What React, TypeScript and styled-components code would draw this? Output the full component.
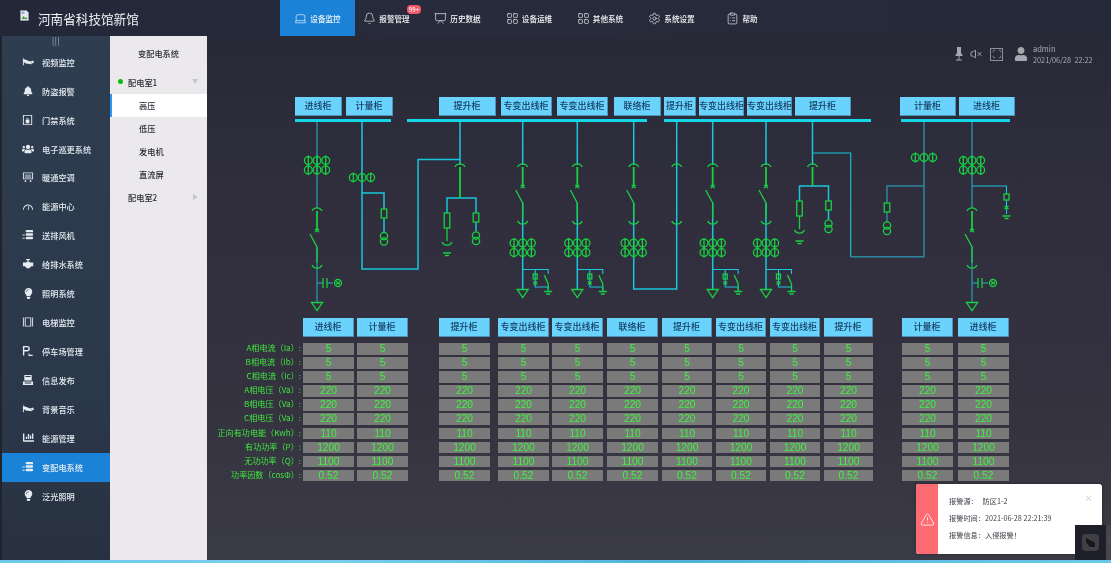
import React from "react";
import styled, { createGlobalStyle } from "styled-components";
import { Laptop, Bell, Presentation, LayoutGrid, Settings, ClipboardList, VolumeX, Scan, X, TriangleAlert } from "lucide-react";
import { FaBell, FaUsers, FaUser, FaLightbulb, FaChartBar } from "react-icons/fa";

const FONT = `"Noto Sans CJK SC", "Noto Sans", sans-serif`;

const Global = createGlobalStyle`
  html, body { margin: 0; padding: 0; background: #2f2d3b; overflow: hidden; }
  * { box-sizing: border-box; }
`;

const Page = styled.div`
  position: relative; width: 1111px; height: 563px; overflow: hidden;
  display: flex; flex-direction: column; font-family: ${FONT}; filter: blur(0.3px);
`;
const Header = styled.header`
  height: 36px; flex: none; display: flex; align-items: stretch;
  background: linear-gradient(90deg, #232838, #272b3b 40%, #252938);
`;
const Brand = styled.div`
  width: 280px; display: flex; align-items: center; padding-left: 20px; gap: 9px;
  color: #f0f2f5; font-size: 12.6px; white-space: nowrap;
`;
const BrokenImage = styled.svg`width: 9px; height: 11px; flex: none; margin-bottom: 6px;`;
const Nav = styled.nav`display: flex; align-items: stretch;`;
const NavItem = styled.div<{ $w: number; $active?: boolean }>`
  position: relative; width: ${p => p.$w}px; display: flex; align-items: center; justify-content: center; gap: 3px;
  color: #f4f5f8; font-size: 7.6px; font-weight: 500; white-space: nowrap;
  background: ${p => (p.$active ? "#1a83d8" : "transparent")};
`;
const Badge = styled.span`
  position: absolute; left: 52px; top: 5px; width: 14px; height: 9px; border-radius: 4px;
  background: #f2596a; color: #fff; font-size: 6px; line-height: 9px; text-align: center;
`;
const Body = styled.div`flex: 1; display: flex; min-height: 0;`;
const Gutter = styled.div`width: 2px; background: #20222c;`;
const Side = styled.aside`
  width: 108px; display: flex; flex-direction: column;
  background: linear-gradient(180deg, #2e3d50, #2b384a 70%, #28313f);
`;
const Handle = styled.div`
  height: 11.8px; color: #aab2bd; font-size: 8px; line-height: 10px; text-align: center; letter-spacing: 0.5px;
`;
const SideItem = styled.div<{ $active?: boolean }>`
  height: 28.93px; flex: none; display: flex; align-items: center; gap: 8px; padding: 0 0 1px 20px;
  color: #e6ebf1; font-size: 8.2px; font-weight: 500; white-space: nowrap;
  background: ${p => (p.$active ? "#1a83d8" : "transparent")};
`;
const SideIcon = styled.svg`width: 12px; height: 12px; flex: none; fill: #e6ebf1; stroke: none;`;
const IconSlot = styled.span`
  width: 12px; height: 12px; flex: none; display: flex; align-items: center; justify-content: center; color: #e6ebf1;
`;
const SubSide = styled.aside`
  width: 97px; background: #ebe9ec; color: #2b2d36; font-size: 8.2px; font-weight: 500; display: flex; flex-direction: column;
`;
const SubTitle = styled.div`height: 35px; padding-top: 10px; line-height: 14px; text-align: center; font-size: 8.2px;`;
const SubGroup = styled.div`
  height: 23px; display: flex; align-items: center; padding: 0 9px 2px 8px; position: relative;
`;
const Dot = styled.span<{ $on?: boolean }>`
  width: 5px; height: 5px; border-radius: 50%; margin-right: 5px; background: ${p => (p.$on ? "#0fb70f" : "transparent")};
`;
const Caret = styled.span<{ $open?: boolean }>`
  margin-left: auto; width: 0; height: 0; border-style: solid;
  ${p => p.$open
    ? "border-width: 5px 3px 0 3px; border-color: #c6c6cb transparent transparent transparent;"
    : "border-width: 3px 0 3px 5px; border-color: transparent transparent transparent #c6c6cb;"}
`;
const SubItem = styled.div<{ $active?: boolean }>`
  height: 23px; display: flex; align-items: center; padding: 0 0 2px 27px;
  border-left: 2.5px solid ${p => (p.$active ? "#2f97f0" : "transparent")};
  background: ${p => (p.$active ? "#fff" : "transparent")};
`;
const Main = styled.main`
  flex: 1; display: flex; flex-direction: column; min-width: 0;
  background: linear-gradient(180deg, #272937 0, #302e3d 30%, #34323f 70%, #3b3b47 100%);
`;
const Status = styled.div`
  height: 61px; flex: none; display: flex; align-items: flex-start; padding: 8px 18px 0 0; justify-content: flex-end; color: #a6a8af;
`;
const StatusIcons = styled.div`display: flex; align-items: center; margin: 3px 5px 0 0;`;
const StatusIcon = styled.span<{ $ml: number }>`display: flex; margin-left: ${p => p.$ml}px;`;
const FrameBox = styled.span`
  width: 13px; height: 13px; margin-left: 8px; border: 1px solid #8e9098; display: flex; align-items: center; justify-content: center;
`;
const UserInfo = styled.div`
  display: flex; flex-direction: column; font-size: 7.3px; line-height: 10.5px; color: #a9abb3; white-space: pre; width: 60px;
`;
const UserName = styled.span`font-size: 7.5px; color: #a9abb3;`;
const Cabinets = styled.div<{ $h: number; $pad: number }>`
  display: flex; height: ${p => p.$h}px; flex: none; padding-left: ${p => p.$pad}px;
`;
const Cabinet = styled.div<{ $w: number; $ml: number }>`
  width: ${p => p.$w}px; margin-left: ${p => p.$ml}px; flex: none; white-space: nowrap; overflow: hidden;
  background: #69d3fe; color: #173f63; font-size: 9px; font-weight: 500; text-align: center; line-height: 18px;
  border-right: 1px solid #4f93b8; border-bottom: 1px solid #4f93b8;
`;
const Diagram = styled.svg`display: block; flex: none; width: 904px; height: 202px;`;
const Wire = styled.path<{ $dark?: boolean; $thin?: boolean }>`
  fill: none; stroke: ${p => (p.$dark ? "#2a87a0" : "#19c6dc")}; stroke-width: ${p => (p.$thin ? 1.1 : 1.5)};
`;
const Bus = styled.rect`fill: #14d6e6;`;
const Green = styled.g`fill: none; stroke: #18d040; stroke-width: 1.3;`;
const Table = styled.div`margin-top: 6px; display: flex; flex-direction: column; gap: 2.6px;`;
const Row = styled.div`display: flex; height: 11.5px; flex: none;`;
const RowLabel = styled.div`
  width: 94px; flex: none; text-align: right; color: #3fe83f; font-size: 8.1px; line-height: 10.5px; white-space: nowrap; overflow: visible; direction: rtl;
`;
const Cell = styled.div<{ $w: number; $ml: number }>`
  width: ${p => p.$w}px; margin-left: ${p => p.$ml}px; flex: none; background: #7a7a7b; color: #3cf53c;
  font-size: 10.2px; line-height: 11.5px; text-align: center; font-family: "Liberation Sans", sans-serif;
`;
const Footer = styled.div`
  height: 3px; flex: none; background: linear-gradient(90deg, #6cc8ea 0, #7ad0ee 28%, #4fb2dd 60%, #6cc8ea 100%);
`;
const Toast = styled.div`
  position: absolute; left: 916px; top: 484px; width: 186px; height: 70px; border-radius: 3px; overflow: hidden;
  display: flex; background: #fff; box-shadow: 0 0 4px rgba(0,0,0,.3);
`;
const ToastSide = styled.div`
  width: 22px; flex: none; background: #ff6b73; color: #fff; display: flex; align-items: center; justify-content: center;
`;
const ToastBody = styled.div`
  flex: 1; padding: 9px 0 0 11px; font-size: 7.2px; line-height: 17px; color: #3e4049; white-space: pre;
`;
const ToastClose = styled.span`position: absolute; right: 9px; top: 10px; color: #a9a9ad; display: flex;`;
const Widget = styled.div`
  position: absolute; left: 1075px; top: 525px; width: 31px; height: 35px; background: #1f1f29;
  display: flex; align-items: center; justify-content: center;
`;
const WidgetKey = styled.div`
  width: 17px; height: 17px; border-radius: 4px; background: #3f4043; color: #16161c; display: flex; align-items: center; justify-content: center;
`;
const Dots = styled.div`
  position: absolute; left: 1106px; top: 525px; width: 5px; height: 35px; background: #45454f; color: #d64a4a;
  font-size: 6px; line-height: 4px; padding-top: 12px; text-align: center;
`;

const cctv = <path d="M1 3l8 3 2 3-7-1-2-1.5V10h-1V2h1zM9 6l3-1 1 2-2 1z" />;
const server = (
  <>
    <rect x="4" y="1" width="8" height="2.6" rx="1" />
    <rect x="4" y="4.7" width="8" height="2.6" rx="1" />
    <rect x="4" y="8.4" width="8" height="2.6" rx="1" />
    <rect x="0.5" y="6" width="2.5" height="1" />
    <rect x="0.5" y="9.5" width="2.5" height="1" />
  </>
);
const draw: Record<string, React.ReactNode> = {
  door: <path fillRule="evenodd" d="M1 1h10v11H1zM2 2v9h8V2zM4 6h4v4H4zM4.8 6a1.2 1.6 0 0 1 2.4 0v.4h-.8V6a.4.8 0 0 0-.8 0v.4h-.8z" />,
  hvac: <path fillRule="evenodd" d="M1 1.5h11v7.5H1zM2 2.5V8h9V2.500zM3 4h7v1H3zM3 6h7v1H3zM3 10h1.500v2H3zM8.500 10H10v2H8.500z" />,
  gauge: <path fillRule="evenodd" d="M1 10.500a5.500 5.500 0 0 1 11 0h-1a4.500 4.500 0 0 0-9 0zM6 10.500l1.500-5 .7.2-1.300 5z" />,
  valve: <path d="M4.500 1h4v1.500H7.200V4l2 1h3v4H10l-2 2H5.200l-2-2H1V5h3l2-1V2.500H4.500z" />,
  lift: <path fillRule="evenodd" d="M1 1.500h1v10H1zM11 1.500h1v10h-1zM3 1.500h7v10H3zM4 2.500v8h5v-8z" />,
  park: <path fillRule="evenodd" d="M1 1h4.500a3 3 0 0 1 0 6H2.500v4.500H1zM2.500 2.500v3h3a1.500 1.500 0 0 0 0-3zM7 9h1v1.500h3.500V12H7z" />,
  info: <path fillRule="evenodd" d="M2.500 1h8v6h-8zM3.800 2.200v1h5.500v-1zM1 8h11v4H1zM3 9.200v1h7v-1z" />,
};

const NavIcon = { size: 13, strokeWidth: 1.2 };
const sideItems: { t: string; icon: React.ReactNode; active?: boolean }[] = [
  { t: "视频监控", icon: <SideIcon viewBox="0 0 13 13">{cctv}</SideIcon> },
  { t: "防盗报警", icon: <FaBell size={10} /> },
  { t: "门禁系统", icon: <SideIcon viewBox="0 0 13 13">{draw.door}</SideIcon> },
  { t: "电子巡更系统", icon: <FaUsers size={12} /> },
  { t: "暖通空调", icon: <SideIcon viewBox="0 0 13 13">{draw.hvac}</SideIcon> },
  { t: "能源中心", icon: <SideIcon viewBox="0 0 13 13">{draw.gauge}</SideIcon> },
  { t: "送排风机", icon: <SideIcon viewBox="0 0 13 13">{server}</SideIcon> },
  { t: "给排水系统", icon: <SideIcon viewBox="0 0 13 13">{draw.valve}</SideIcon> },
  { t: "照明系统", icon: <FaLightbulb size={11} /> },
  { t: "电梯监控", icon: <SideIcon viewBox="0 0 13 13">{draw.lift}</SideIcon> },
  { t: "停车场管理", icon: <SideIcon viewBox="0 0 13 13">{draw.park}</SideIcon> },
  { t: "信息发布", icon: <SideIcon viewBox="0 0 13 13">{draw.info}</SideIcon> },
  { t: "背景音乐", icon: <SideIcon viewBox="0 0 13 13">{cctv}</SideIcon> },
  { t: "能源管理", icon: <FaChartBar size={11} /> },
  { t: "变配电系统", icon: <SideIcon viewBox="0 0 13 13">{server}</SideIcon>, active: true },
  { t: "泛光照明", icon: <FaLightbulb size={11} /> },
];

const topCabinets: [string, number, number][] = [
  ["进线柜", 47, 88], ["计量柜", 47, 4], ["提升柜", 57, 46], ["专变出线柜", 51, 5], ["专变出线柜", 51, 5],
  ["联络柜", 47, 6], ["提升柜", 32, 3], ["专变出线柜", 45, 3], ["专变出线柜", 45, 3], ["提升柜", 56, 3],
  ["计量柜", 56, 49], ["进线柜", 56, 3],
];
const bottomCabinets: [string, number, number][] = [
  ["进线柜", 51, 2], ["计量柜", 51, 3], ["提升柜", 51, 31], ["专变出线柜", 51, 8], ["专变出线柜", 51, 3],
  ["联络柜", 51, 4], ["提升柜", 50, 4], ["专变出线柜", 50, 4], ["专变出线柜", 50, 4], ["提升柜", 49, 4],
  ["计量柜", 51, 29], ["进线柜", 51, 5],
];
const rows: [string, string][] = [
  ["A相电流（Ia）:", "5"], ["B相电流（Ib）:", "5"], ["C相电流（Ic）:", "5"],
  ["A相电压（Va）:", "220"], ["B相电压（Va）:", "220"], ["C相电压（Va）:", "220"],
  ["正向有功电能（Kwh）:", "110"], ["有功功率（P）:", "1200"], ["无功功率（Q）:", "1100"], ["功率因数（cosΦ）:", "0.52"],
];

type P = { x: number; y: number };
const CtRow = ({ x, y }: P) => (
  <>
    {[-8.7, 0, 8.7].map(d => (
      <g key={d}>
        <circle cx={x + d} cy={y} r={3.9} />
        <path d={`M${x + d} ${y - 5}V${y + 5}`} />
      </g>
    ))}
  </>
);
const TopArc = ({ x, y }: P) => <path d={`M${x - 5} ${y + 2}A5.500 5.500 0 0 1 ${x + 5} ${y + 2}`} />;
const LowArc = ({ x, y }: P) => <path d={`M${x - 5} ${y - 2}A5.500 5.500 0 0 0 ${x + 5} ${y - 2}`} />;
const Cross = ({ x, y }: P) => <path d={`M${x - 2} ${y - 1.500}L${x + 2} ${y + 1.500}M${x + 2} ${y - 1.500}L${x - 2} ${y + 1.500}`} />;
const Earth = ({ x, y }: P) => <path d={`M${x - 4} ${y}H${x + 4}M${x - 2} ${y + 2.500}H${x + 2}`} />;
const Arrow = ({ x, y }: P) => <path d={`M${x - 5.500} ${y}H${x + 5.500}L${x} ${y + 8}Z`} />;
const Xfmr = ({ x, y }: P) => (
  <>
    <circle cx={x} cy={y} r={3.600} />
    <circle cx={x} cy={y + 5.500} r={3.600} />
  </>
);
const Fuse = ({ x, y, h = 9 }: P & { h?: number }) => <rect x={x - 2.800} y={y} width={5.600} height={h} />;
const Breaker = ({ x, top = 165 }: { x: number; top?: number }) => (
  <Green>
    <TopArc x={x} y={top} />
    <path strokeWidth={1.800} d={`M${x} ${top + 2}V${top + 21}`} />
    <Cross x={x} y={top + 21.500} />
    <path d={`M${x - 7} ${top + 25}L${x} ${top + 38}V${top + 54}`} />
    <LowArc x={x} y={top + 58} />
  </Green>
);
const Relay = ({ x }: { x: number }) => (
  <>
    <Wire $thin d={`M${x} 269.500H${x + 25.500}V274M${x + 12.500} 269.500V287H${x + 25.500}V291`} />
    <Green>
      <rect x={x + 10.500} y={274} width={4} height={5} />
      <Cross x={x + 12.500} y={283} />
      <path d={`M${x + 21.500} 275L${x + 25.500} 284V290`} />
      <Earth x={x + 25.500} y={291.500} />
    </Green>
  </>
);
const Feeder = ({ x }: { x: number }) => (
  <>
    <Wire d={`M${x} 122V165M${x} 203V289`} />
    <Breaker x={x} />
    <Green><CtRow x={x} y={243} /><CtRow x={x} y={252.500} /><Arrow x={x} y={289.500} /></Green>
    <Relay x={x} />
  </>
);
const Incomer = ({ x }: { x: number }) => (
  <>
    <Wire $dark d={`M${x} 122V208M${x} 247V302M${x} 283H${x + 6}M${x + 10} 283H${x + 16}`} />
    <Breaker x={x} top={209} />
    <Green>
      <CtRow x={x} y={160.500} />
      <CtRow x={x} y={170} />
      <path d={`M${x + 6} 278V288M${x + 10} 278V288`} />
      <circle cx={x + 21} cy={283} r={3.500} />
      <Cross x={x + 21} y={283} />
      <Arrow x={x} y={302.500} />
    </Green>
  </>
);
const Lift = ({ x, y }: P) => (
  <>
    <Wire d={`M${x} 122V165M${x - 13} ${y + 15}V${y}H${x + 16}V${y + 15}M${x + 16} ${y + 24}V${y + 33}`} />
    <Green>
      <TopArc x={x} y={165} />
      <path strokeWidth={1.800} d={`M${x} 167V${y}`} />
      <Fuse x={x - 13} y={y + 15} h={15} />
      <path d={`M${x - 13} ${y + 30}V${y + 43}`} />
      <LowArc x={x - 13} y={y + 46} />
      <Earth x={x - 13} y={y + 55} />
      <Fuse x={x + 16} y={y + 15} />
      <Xfmr x={x + 16} y={y + 37.500} />
    </Green>
  </>
);

const SingleLine = () => (
  <Diagram viewBox="207 116 904 202">
    <Bus x={295} y={119} width={96} height={3} />
    <Bus x={407} y={119} width={240} height={3} />
    <Bus x={664} y={119} width={207} height={3} />
    <Bus x={901} y={119} width={109} height={3} />

    <Incomer x={317} />
    <Wire d="M362 122V269H418V159.500H460M362 193H384V209M384 218V233" />
    <Green>
      <CtRow x={362} y={177.500} />
      <Fuse x={384} y={209} />
      <Xfmr x={384} y={236} />
    </Green>
    <Lift x={460} y={198} />
    <Feeder x={522.700} />
    <Feeder x={577.300} />

    <Wire d="M633.700 122V165M633.700 203V289H676.700V122" />
    <Breaker x={633.700} />
    <Green>
      <CtRow x={633.700} y={243} />
      <CtRow x={633.700} y={252.500} />
      <TopArc x={676.700} y={165} />
      <LowArc x={676.700} y={223} />
    </Green>

    <Feeder x={712.700} />
    <Feeder x={766} />
    <Lift x={812.500} y={186} />
    <Wire $thin d="M812.500 153H850.700V256.700" />
    <Wire $dark d="M850.700 256.700H924V122M924 186H887V203M887 212V222" />
    <Green>
      <CtRow x={924} y={157.500} />
      <Fuse x={887} y={203} />
      <Xfmr x={887} y={225.500} />
    </Green>
    <Incomer x={972} />
    <Wire $thin d="M972 186H1006.500V194M1006.500 200V214" />
    <Green>
      <rect x={1004} y={194} width={5} height={6} />
      <Cross x={1006.500} y={207.500} />
      <Earth x={1006.500} y={216} />
    </Green>
  </Diagram>
);

export default function App() {
  return (
    <Page>
      <Global />
      <Header>
        <Brand>
          <BrokenImage viewBox="0 0 9 11">
            <path d="M.5.5h6l2 2v8H.5z" fill="#e8e8ec" stroke="#9a9aa2" strokeWidth=".6" />
            <path d="M1.500 9l2-3 1.500 2 1-1 1.500 2z" fill="#4c9a3c" />
            <rect x="1.500" y="1.500" width="3" height="2.500" fill="#7fb2e8" />
          </BrokenImage>
          <span>河南省科技馆新馆</span>
        </Brand>
        <Nav>
          <NavItem $w={75} $active><Laptop {...NavIcon} />设备监控</NavItem>
          <NavItem $w={63}><Bell {...NavIcon} />报警管理<Badge>99+</Badge></NavItem>
          <NavItem $w={79}><Presentation {...NavIcon} />历史数据</NavItem>
          <NavItem $w={64}><LayoutGrid {...NavIcon} />设备运维</NavItem>
          <NavItem $w={78}><LayoutGrid {...NavIcon} />其他系统</NavItem>
          <NavItem $w={65}><Settings {...NavIcon} />系统设置</NavItem>
          <NavItem $w={76}><ClipboardList {...NavIcon} />帮助</NavItem>
        </Nav>
      </Header>
      <Body>
        <Gutter />
        <Side>
          <Handle>|||</Handle>
          {sideItems.map(s => (
            <SideItem key={s.t + String(s.active)} $active={s.active}>
              <IconSlot>{s.icon}</IconSlot>
              {s.t}
            </SideItem>
          ))}
        </Side>
        <SubSide>
          <SubTitle>变配电系统</SubTitle>
          <SubGroup><Dot $on />配电室1<Caret $open /></SubGroup>
          <SubItem $active>高压</SubItem>
          <SubItem>低压</SubItem>
          <SubItem>发电机</SubItem>
          <SubItem>直流屏</SubItem>
          <SubGroup><Dot />配电室2<Caret /></SubGroup>
        </SubSide>
        <Main>
          <Status>
            <StatusIcons>
              <StatusIcon $ml={0}>
                <svg width="8" height="14" viewBox="0 0 8 14" fill="#a6a8af">
                  <path d="M2 0h4v6l1.500 2v1h-7V8L2 6zM3.500 9h1v3.500H7v1H1v-1h2.500z" />
                </svg>
              </StatusIcon>
              <StatusIcon $ml={7}><VolumeX size={12} strokeWidth={2} /></StatusIcon>
              <FrameBox><Scan size={10} strokeWidth={1.500} /></FrameBox>
              <StatusIcon $ml={11}><FaUser size={14} /></StatusIcon>
            </StatusIcons>
            <UserInfo>
              <UserName>admin</UserName>
              {"2021/06/28  22:22"}
            </UserInfo>
          </Status>
          <Cabinets $h={19} $pad={0}>
            {topCabinets.map(([t, w, ml], i) => <Cabinet key={i} $w={w} $ml={ml}>{t}</Cabinet>)}
          </Cabinets>
          <SingleLine />
          <Cabinets $h={19} $pad={94}>
            {bottomCabinets.map(([t, w, ml], i) => <Cabinet key={i} $w={w} $ml={ml}>{t}</Cabinet>)}
          </Cabinets>
          <Table>
            {rows.map(([label, value]) => (
              <Row key={label}>
                <RowLabel><bdi>{label}</bdi></RowLabel>
                {bottomCabinets.map(([, w, ml], i) => <Cell key={i} $w={w} $ml={ml}>{value}</Cell>)}
              </Row>
            ))}
          </Table>
        </Main>
      </Body>
      <Footer />
      <Toast>
        <ToastSide><TriangleAlert size={15} strokeWidth={1.300} /></ToastSide>
        <ToastBody>
          {"报警源：   防区1-2\n报警时间：2021-06-28 22:21:39\n报警信息：入侵报警！"}
        </ToastBody>
        <ToastClose><X size={9} strokeWidth={1.500} /></ToastClose>
      </Toast>
      <Widget>
        <WidgetKey>
          <svg width="9" height="9" viewBox="0 0 9 9"><path d="M0 0l9 4.500v4.500H4L0 4z" fill="currentColor" /></svg>
        </WidgetKey>
      </Widget>
      <Dots>⋮</Dots>
    </Page>
  );
}
